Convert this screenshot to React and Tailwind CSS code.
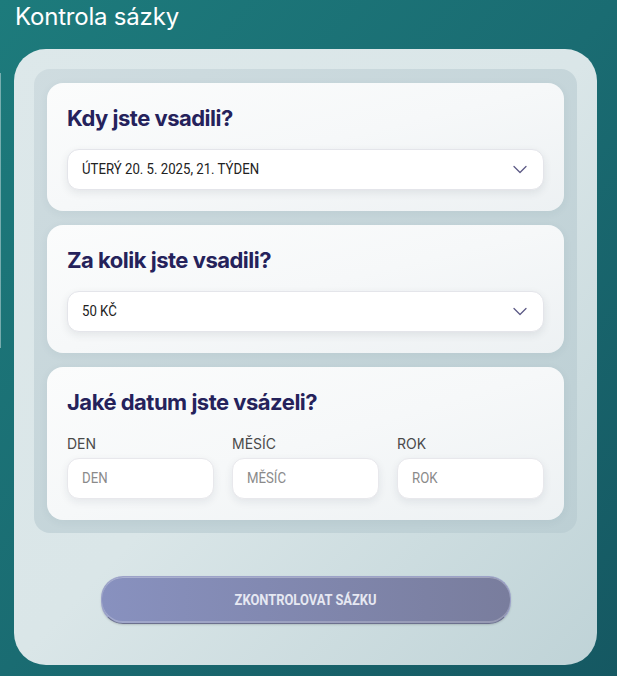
import React from "react";

const cond = "inline-block origin-left scale-x-[0.88] whitespace-nowrap";

function Chevron() {
  return (
    <svg width="14" height="9" viewBox="0 0 14 9" fill="none">
      <path d="M1 1.5l6 6 6-6" stroke="#5d5a86" strokeWidth="1.3" strokeLinecap="round" strokeLinejoin="round" />
    </svg>
  );
}

function Select({ value }) {
  return (
    <div className="h-[41px] rounded-[12px] bg-white border border-[#e4e5ea] shadow-[0_3px_8px_rgba(30,40,60,0.09)] flex items-center justify-between pl-[14px] pr-[16px]">
      <span className={cond + " text-[15px] text-[#222222] font-[Roboto,sans-serif]"}>{value}</span>
      <Chevron />
    </div>
  );
}

function Card({ title, children, className = "" }) {
  return (
    <div className={"rounded-[16px] bg-gradient-to-br from-[#fbfcfc] via-[#f6f8f9] to-[#edf1f3] shadow-[0_2px_10px_rgba(40,70,80,0.06)] px-[20px] pt-[21px] pb-[21px] " + className}>
      <h2 className="text-[22px] leading-[28px] font-bold text-[#25225b] tracking-[-0.5px] font-[Inter,sans-serif]">{title}</h2>
      {children}
    </div>
  );
}

function DateField({ label }) {
  return (
    <div className="flex flex-col">
      <div className="text-[14px] leading-[20px] text-[#4a4a4a] font-[Inter,sans-serif] mb-[4px]">{label}</div>
      <div className="h-[41px] rounded-[12px] bg-white border border-[#e8e8ec] shadow-[0_3px_8px_rgba(30,40,60,0.08)] flex items-center pl-[14px]">
        <span className={cond + " text-[15px] text-[#8a8a8a] font-[Roboto,sans-serif]"}>{label}</span>
      </div>
    </div>
  );
}

export default function App() {
  return (
    <div className="relative w-[617px] h-[676px] overflow-hidden bg-gradient-to-br from-[#1d7b7c] via-[#1a6c72] to-[#155862]">
      <div className="absolute left-0 top-[73px] h-[275px] w-px bg-white/40" />
      <h1 className="pl-[15px] pt-[2px] text-[24px] leading-[30px] text-white tracking-[-0.2px] font-[Inter,sans-serif]">
        Kontrola sázky
      </h1>
      <div className="ml-[14px] mt-[17px] w-[583px] h-[616px] rounded-[32px] bg-gradient-to-br from-[#dde8ea] via-[#dae6e8] to-[#bfd3d7] p-[20px] flex flex-col">
        <div className="rounded-[16px] bg-gradient-to-br from-[#cfdce0] to-[#bccfd4] px-[13px] pt-[14px] pb-[13px] flex flex-col gap-[14px]">
          <Card title="Kdy jste vsadili?">
            <div className="mt-[17px]">
              <Select value="ÚTERÝ 20. 5. 2025, 21. TÝDEN" />
            </div>
          </Card>
          <Card title="Za kolik jste vsadili?">
            <div className="mt-[17px]">
              <Select value="50 KČ" />
            </div>
          </Card>
          <Card title="Jaké datum jste vsázeli?">
            <div className="mt-[18px] grid grid-cols-3 gap-[18px]">
              <DateField label="DEN" />
              <DateField label="MĚSÍC" />
              <DateField label="ROK" />
            </div>
          </Card>
        </div>
        <div className="mt-[43px] flex justify-center">
          <button className="w-[410px] h-[48px] rounded-[22px] bg-gradient-to-r from-[#8891bf] to-[#797d9d] border border-[#9ca2c8] border-b-[#6c708e] shadow-[inset_0_1px_0_rgba(255,255,255,0.3),inset_0_-2px_0_rgba(255,255,255,0.22),0_1px_2px_rgba(0,0,0,0.15)] flex items-center justify-center">
            <span className="inline-block scale-x-[0.86] whitespace-nowrap text-[15px] font-bold text-[#e6e8f2] font-[Roboto,sans-serif]">
              ZKONTROLOVAT SÁZKU
            </span>
          </button>
        </div>
      </div>
    </div>
  );
}
